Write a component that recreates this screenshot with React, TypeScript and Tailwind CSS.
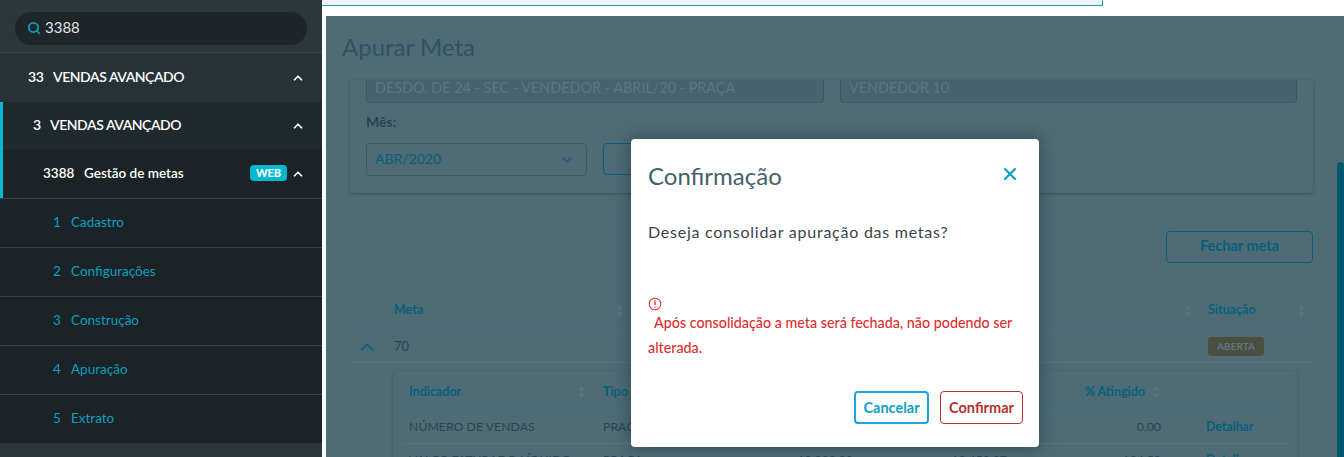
import { ChevronDown, ChevronUp, Search, X } from "lucide-react";

const subItems = [
  { num: "1", label: "Cadastro" },
  { num: "2", label: "Configurações" },
  { num: "3", label: "Construção" },
  { num: "4", label: "Apuração" },
  { num: "5", label: "Extrato" },
];

const SortIcon = () => (
  <svg width="7" height="12" viewBox="0 0 7 12" className="shrink-0">
    <path d="M3.5 0.5 L6.5 4.5 H0.5 Z M3.5 11.5 L0.5 7.5 H6.5 Z" fill="#5c7681" />
  </svg>
);

const Sidebar = () => (
  <aside className="w-[322px] shrink-0 h-[457px] overflow-hidden bg-[#2a373b] text-white">
    <div className="h-[53px] pt-3 px-[15px] border-b border-[#3a484c]">
      <div className="flex items-center h-[33px] w-[292px] rounded-full bg-[#1e2629] pl-3 pb-[2px]">
        <Search size={14} strokeWidth={3} className="text-[#0a9fc0]" />
        <span className="ml-1 text-[15px] text-[#dfe3e4]">3388</span>
      </div>
    </div>
    <div className="flex items-center h-[49px] bg-[#263235] pl-7 pr-[17px] pb-[2px] text-[14px] font-semibold tracking-[-0.45px]">
      <span className="w-[25px]">33</span>
      <span className="flex-1">VENDAS AVANÇADO</span>
      <ChevronUp size={14} strokeWidth={3} className="mt-[2px]" />
    </div>
    <div className="border-l-[3px] border-[#00b8d0]">
      <div className="flex items-center h-[48px] bg-[#202a2d] pl-[30px] pr-[17px] pb-1 text-[14px] font-semibold tracking-[-0.45px]">
        <span className="w-[17px]">3</span>
        <span className="flex-1">VENDAS AVANÇADO</span>
        <ChevronUp size={14} strokeWidth={3} className="mt-1" />
      </div>
      <div className="flex items-center h-[48px] bg-[#1b2326] pl-10 pr-[17px] pb-[2px] text-[13.5px] font-semibold">
        <span className="w-[41px]">3388</span>
        <span className="flex-1">Gestão de metas</span>
        <span className="flex items-center justify-center w-[37px] h-4 mr-[4px] rounded-sm bg-[#00b8d0] text-[11px] font-black">WEB</span>
        <ChevronUp size={14} strokeWidth={3} className="mt-[2px]" />
      </div>
    </div>
    {subItems.map((item) => (
      <div
        key={item.num}
        className="flex items-center h-[49px] border-t border-[#364347] bg-[#1b2326] pl-[53px] pb-[2px] text-[13.5px] text-[#0a9fc0]"
      >
        <span className="w-[18px]">{item.num}</span>
        <span>{item.label}</span>
      </div>
    ))}
  </aside>
);

const HeadCell = ({ label, className }: { label: string; className: string }) => (
  <div className={`flex items-center justify-between text-[12.5px] font-bold text-[#07607c] ${className}`}>
    <span>{label}</span>
    <SortIcon />
  </div>
);

const Page = () => (
  <div className="h-[441px] bg-[#4e6b76] overflow-hidden">
    <div className="flex h-[64px] items-start pl-4 pt-4 text-[24px] leading-[30px] text-[#2f5363]">Apurar Meta</div>
    <div className="mx-6 w-[963px] h-[113px] rounded-b bg-[#4e6b76] px-4 shadow-[0_1px_3px_rgba(30,50,60,0.4)]">
      <div className="flex gap-4">
        <div className="w-[458px] h-[23px] rounded-b border-b border-x border-[#3d5865] bg-[#476370] pl-[8px] text-[14.4px] leading-[15px] text-[#5d7682]">
          DESDO. DE 24 - SEC - VENDEDOR - ABRIL/20 - PRAÇA
        </div>
        <div className="w-[457px] h-[23px] rounded-b border-b border-x border-[#3d5865] bg-[#476370] pl-[8px] text-[14.4px] leading-[15px] text-[#5d7682]">
          VENDEDOR 10
        </div>
      </div>
      <div className="mt-[10px] text-[14px] font-bold leading-[18px] text-[#2c4552]">Mês:</div>
      <div className="mt-[12px] flex gap-4">
        <div className="flex items-center justify-between w-[221px] h-[33px] rounded border border-[#3d5865] pl-[8px] pr-[12px] pb-[2px] text-[14px] text-[#07607c]">
          <span>ABR/2020</span>
          <ChevronDown size={14} strokeWidth={2} className="mt-[2px]" />
        </div>
        <div className="w-[120px] h-[32px] rounded border border-[#07607c]" />
      </div>
    </div>
    <div className="flex justify-end mt-[38px] pr-[31px]">
      <div className="flex items-center justify-center w-[147px] h-[32px] rounded border border-[#07607c] pb-[2px] text-[14.5px] font-bold text-[#07607c]">
        Fechar meta
      </div>
    </div>
    <div className="ml-6 mr-[31px] mt-[35px]">
      <div className="flex items-center h-[33px] border-b-2 border-[#44727f] pb-[6px] pl-11">
        <HeadCell label="Meta" className="w-[229px]" />
        <div className="flex-1" />
        <SortIcon />
        <HeadCell label="Situação" className="w-[105px] ml-[17px] pr-2" />
      </div>
      <div className="flex items-center h-[32px] border-b border-[#567380] text-[13px] text-[#2c4552]">
        <ChevronUp size={22} strokeWidth={1.7} className="ml-[6px] text-[#07607c]" />
        <span className="ml-4">70</span>
        <span className="ml-auto mr-[49px] flex items-center justify-center w-[56px] h-[19px] rounded-sm bg-[#4c4e3e] text-[10px] font-bold text-[#5d7682]">ABERTA</span>
      </div>
      <div className="ml-[43px] mr-[16px] mt-2 h-[120px] rounded bg-[#4e6b76] px-[8px] shadow-[0_1px_3px_rgba(30,50,60,0.35)]">
        <div className="flex items-center h-[41px] border-b-2 border-[#44727f] pl-2 pt-[3px]">
          <HeadCell label="Indicador" className="w-[176px]" />
          <span className="ml-[18px] text-[12.5px] font-bold text-[#07607c]">Tipo de</span>
          <span className="ml-auto text-[12.5px] font-bold text-[#07607c]">% Atingido</span>
          <div className="ml-[8px] mr-[129px]"><SortIcon /></div>
        </div>
        <div className="flex items-center h-[32px] border-b border-[#567380] pl-2 text-[12.3px] text-[#2c4552]">
          <span className="w-[194px]">NÚMERO DE VENDAS</span>
          <span className="w-[190px]">PRAÇA</span>
          <span className="w-[60px]" />
          <span className="w-[154px]" />
          <span className="w-[154px] text-right">0,00</span>
          <span className="ml-[45px] font-bold text-[#07607c]">Detalhar</span>
        </div>
        <div className="flex items-center h-[32px] pl-2 text-[12.3px] text-[#2c4552]">
          <span className="w-[194px]">VALOR FATURADO LÍQUIDO</span>
          <span className="w-[190px]">PRAÇA</span>
          <span className="w-[60px] text-right">10.000,00</span>
          <span className="w-[154px] text-right">13.450,27</span>
          <span className="w-[154px] text-right">134,50</span>
          <span className="ml-[45px] font-bold text-[#07607c]">Detalhar</span>
        </div>
      </div>
    </div>
  </div>
);

const ConfirmDialog = () => (
  <div className="absolute left-[631px] top-[139px] w-[408px] h-[308px] rounded bg-white pl-[17px] pr-4 shadow-[0_0_16px_rgba(20,40,50,0.55)]">
    <div className="flex items-center justify-between h-[74px] pr-[3px]">
      <span className="text-[24px] text-[#44626c]">Confirmação</span>
      <X size={20} strokeWidth={2.5} className="text-[#0a9fc0] -mt-1" />
    </div>
    <p className="mt-[9px] text-[16px] tracking-[0.75px] leading-[20px] text-[#3a4447]">Deseja consolidar apuração das metas?</p>
    <div className="mt-[55px] text-[14.3px] font-medium leading-[25px] text-[#dc3030]">
      <svg width="14" height="14" viewBox="0 0 14 14" className="mb-[1px]">
        <circle cx="7" cy="7" r="5.8" fill="none" stroke="#dc3030" strokeWidth="1.1" />
        <path d="M7 3.6V8 M7 9.4V10.5" stroke="#dc3030" strokeWidth="1.3" />
      </svg>
      <div className="-mt-[2px] indent-[6px]">Após consolidação a meta será fechada, não podendo ser alterada.</div>
    </div>
    <div className="flex justify-end gap-[11px] mt-[31px]">
      <button className="w-[75px] h-[33px] rounded-sm border-2 border-[#1aa3dc] text-[14.5px] font-bold text-[#129fc2]">Cancelar</button>
      <button className="w-[83px] h-[33px] rounded-sm border border-[#b3302c] text-[14.5px] font-bold text-[#b3302c]">Confirmar</button>
    </div>
  </div>
);

export default function App() {
  return (
    <div className="relative flex w-[1344px] h-[457px] overflow-hidden bg-white font-['Lato',sans-serif]">
      <Sidebar />
      <main className="flex-1 pl-1 min-w-0">
        <div className="h-4">
          <div className="-ml-1 w-[781px] h-[6px] bg-[#f4f4f4] border-b border-r border-[#1a9cbc]" />
        </div>
        <div className="relative">
          <Page />
          <div className="absolute right-0 top-[146px] w-[7px] h-[295px] rounded-t bg-[#005770]" />
        </div>
      </main>
      <ConfirmDialog />
    </div>
  );
}
